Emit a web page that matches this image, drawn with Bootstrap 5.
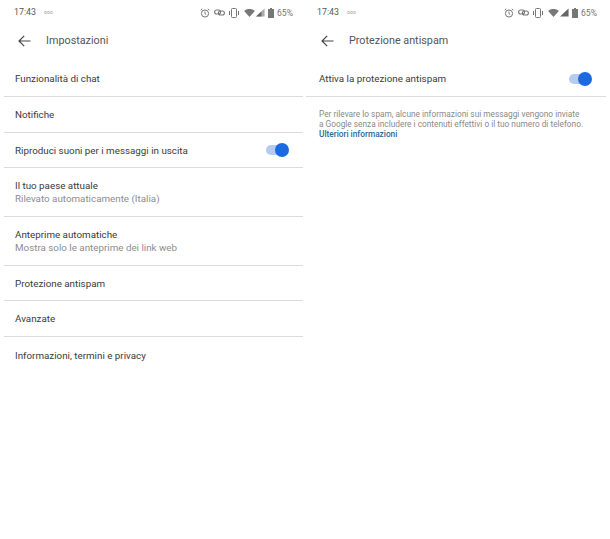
<!DOCTYPE html>
<html lang="it">
<head>
<meta charset="utf-8">
<title>Impostazioni</title>
<link href="https://cdn.jsdelivr.net/npm/bootstrap@5.3.0/dist/css/bootstrap.min.css" rel="stylesheet">
<style>
html,body{margin:0;height:539px;overflow:hidden;background:#fff}
body{font-family:Roboto,"Liberation Sans",sans-serif;color:#2b2b2b}
.phone{width:303px;height:539px;flex:none}
.phone-b{width:307px}
.sbar{height:26px;padding:0 10px 0 14px;font-size:8.6px;color:#767676}
.phone-b .sbar{padding-right:13px}
.sbar .clock{font-size:8.8px;color:#555}
.sbar .dots{font-size:5px;color:#999;margin-left:8px;letter-spacing:.2px}
.sicons{gap:3.5px}
.tbar{height:30px;padding-left:18px}
.tbar-title{font-size:10.8px;color:#555;margin-left:15px;line-height:1}
.rows{padding:0 0 0 4px;margin-top:5px}
.phone-b .rows{padding:0 4px 0 3px}
.line{min-height:36px;padding:0 15px 0 11px;border-bottom:1px solid #dcdcdc;font-size:9.8px;line-height:13px;color:#3a3a3a}
.phone-b .line{padding-left:13px}
.line.tight{min-height:35px}
.line.two{min-height:49px}
.line.last{border-bottom:0}
.sub{color:#8d8d8d}
.tgl{position:relative;width:22px;height:10px;border-radius:5px;background:#b5cbef;flex:none}
.tgl::after{content:"";position:absolute;right:-1px;top:-2px;width:14px;height:14px;border-radius:50%;background:#1b6ae0}
.help{padding:12px 14px 0 16px;font-size:8.3px;line-height:10px;color:#8a8a8a;white-space:nowrap}
.help b{display:block;font-weight:500;color:#2a6a94}
</style>
</head>
<body>
<div class="d-flex">
  <section class="phone">
    <div class="sbar d-flex align-items-center justify-content-between">
      <div class="d-flex align-items-center"><span class="clock">17:43</span><span class="dots">ooo</span></div>
      <div class="sicons d-flex align-items-center">
        <svg width="10" height="10" viewBox="0 0 10 10" fill="none" stroke="#777" stroke-width="1"><circle cx="5" cy="5.500" r="3.600"/><path d="M5 3.500V5.700L6.300 6.500M.7 2.200 2.200.8M9.300 2.200 7.800.8"/></svg>
        <svg width="11" height="7" viewBox="0 0 11 7" fill="none" stroke="#777" stroke-width="1.100"><rect x=".6" y="1" width="6" height="4" rx="2"/><rect x="4.400" y="2" width="6" height="4" rx="2"/></svg>
        <svg width="12" height="10" viewBox="0 0 12 10" fill="none" stroke="#777"><rect x="3.500" y=".5" width="5" height="9" rx="1"/><path d="M1.500 3V7M10.500 3V7"/></svg>
        <div class="d-flex align-items-center" style="gap:1px">
          <svg width="11" height="8" viewBox="0 0 12 9"><path fill="#777" d="M0 2.200C3.500-.7 8.500-.7 12 2.200L6 9Z"/></svg>
          <svg width="9" height="9" viewBox="0 0 10 9"><path fill="#aaa" d="M9.500 0V9H0Z"/><path fill="#666" d="M6 3.500V9H0Z"/></svg>
        </div>
        <div class="d-flex align-items-center" style="gap:3px">
          <svg width="6" height="10" viewBox="0 0 6 10"><path fill="#777" d="M2 0H4V1H6V10H0V1H2Z"/></svg>
          <span>65%</span>
        </div>
      </div>
    </div>
    <div class="tbar d-flex align-items-center">
      <svg width="13" height="12" viewBox="0 0 13 12" fill="none" stroke="#444" stroke-width="1.200"><path d="M12.500 6H1M6.200.8 1 6l5.200 5.200"/></svg>
      <div class="tbar-title">Impostazioni</div>
    </div>
    <div class="rows">
      <div class="line d-flex align-items-center">Funzionalità di chat</div>
      <div class="line d-flex align-items-center">Notifiche</div>
      <div class="line tight d-flex align-items-center justify-content-between">Riproduci suoni per i messaggi in uscita<span class="tgl"></span></div>
      <div class="line two d-flex flex-column justify-content-center">Il tuo paese attuale<span class="sub">Rilevato automaticamente (Italia)</span></div>
      <div class="line two d-flex flex-column justify-content-center">Anteprime automatiche<span class="sub">Mostra solo le anteprime dei link web</span></div>
      <div class="line tight d-flex align-items-center">Protezione antispam</div>
      <div class="line d-flex align-items-center">Avanzate</div>
      <div class="line last d-flex align-items-center">Informazioni, termini e privacy</div>
    </div>
  </section>
  <section class="phone phone-b">
    <div class="sbar d-flex align-items-center justify-content-between">
      <div class="d-flex align-items-center"><span class="clock">17:43</span><span class="dots">ooo</span></div>
      <div class="sicons d-flex align-items-center">
        <svg width="10" height="10" viewBox="0 0 10 10" fill="none" stroke="#777" stroke-width="1"><circle cx="5" cy="5.500" r="3.600"/><path d="M5 3.500V5.700L6.300 6.500M.7 2.200 2.200.8M9.300 2.200 7.800.8"/></svg>
        <svg width="11" height="7" viewBox="0 0 11 7" fill="none" stroke="#777" stroke-width="1.100"><rect x=".6" y="1" width="6" height="4" rx="2"/><rect x="4.400" y="2" width="6" height="4" rx="2"/></svg>
        <svg width="12" height="10" viewBox="0 0 12 10" fill="none" stroke="#777"><rect x="3.500" y=".5" width="5" height="9" rx="1"/><path d="M1.500 3V7M10.500 3V7"/></svg>
        <div class="d-flex align-items-center" style="gap:1px">
          <svg width="11" height="8" viewBox="0 0 12 9"><path fill="#777" d="M0 2.200C3.500-.7 8.500-.7 12 2.200L6 9Z"/></svg>
          <svg width="9" height="9" viewBox="0 0 10 9"><path fill="#666" d="M9.500 0V9H0Z"/></svg>
        </div>
        <div class="d-flex align-items-center" style="gap:3px">
          <svg width="6" height="10" viewBox="0 0 6 10"><path fill="#777" d="M2 0H4V1H6V10H0V1H2Z"/></svg>
          <span>65%</span>
        </div>
      </div>
    </div>
    <div class="tbar d-flex align-items-center">
      <svg width="13" height="12" viewBox="0 0 13 12" fill="none" stroke="#444" stroke-width="1.200"><path d="M12.500 6H1M6.200.8 1 6l5.200 5.200"/></svg>
      <div class="tbar-title">Protezione antispam</div>
    </div>
    <div class="rows">
      <div class="line d-flex align-items-center justify-content-between">Attiva la protezione antispam<span class="tgl"></span></div>
    </div>
    <div class="help">Per rilevare lo spam, alcune informazioni sui messaggi vengono inviate<br>a Google senza includere i contenuti effettivi o il tuo numero di telefono.<b>Ulteriori informazioni</b></div>
  </section>
</div>
<script src="https://cdn.jsdelivr.net/npm/bootstrap@5.3.0/dist/js/bootstrap.bundle.min.js"></script>
</body>
</html>
